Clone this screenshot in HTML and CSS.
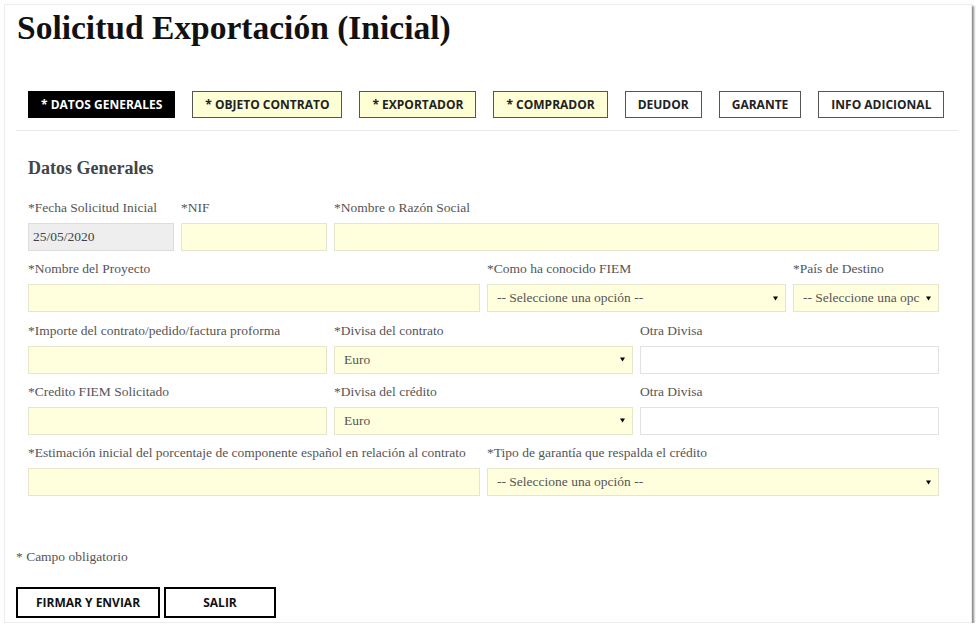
FILE: index.html
```html
<!DOCTYPE html>
<html lang="es">
<head>
<meta charset="utf-8">
<title>Solicitud Exportación (Inicial)</title>
<link rel="stylesheet" href="styles.css">
</head>
<body>
<div class="card">
  <h1 class="title">Solicitud Exportación (Inicial)</h1>
  <nav class="tabs">
    <span class="tab active">* DATOS GENERALES</span>
    <span class="tab req">* OBJETO CONTRATO</span>
    <span class="tab req">* EXPORTADOR</span>
    <span class="tab req">* COMPRADOR</span>
    <span class="tab">DEUDOR</span>
    <span class="tab">GARANTE</span>
    <span class="tab">INFO ADICIONAL</span>
  </nav>
  <div class="rule"></div>
  <section class="form">
    <h2 class="section-title">Datos Generales</h2>
    <div class="grid">
      <div class="field s2"><label>*Fecha Solicitud Inicial</label><div class="input disabled">25/05/2020</div></div>
      <div class="field s2"><label>*NIF</label><div class="input"></div></div>
      <div class="field s8"><label>*Nombre o Razón Social</label><div class="input"></div></div>

      <div class="field s6"><label>*Nombre del Proyecto</label><div class="input"></div></div>
      <div class="field s4"><label>*Como ha conocido FIEM</label><div class="input select"><span class="opt">-- Seleccione una opción --</span><svg class="arrow" width="5" height="5" viewBox="0 0 5 5"><path d="M0 0.5H5L2.5 4.5Z" fill="#000"/></svg></div></div>
      <div class="field s2"><label>*País de Destino</label><div class="input select"><span class="opt">-- Seleccione una opc</span><svg class="arrow" width="5" height="5" viewBox="0 0 5 5"><path d="M0 0.5H5L2.5 4.5Z" fill="#000"/></svg></div></div>

      <div class="field s4"><label>*Importe del contrato/pedido/factura proforma</label><div class="input"></div></div>
      <div class="field s4"><label>*Divisa del contrato</label><div class="input select"><span class="opt">Euro</span><svg class="arrow" width="5" height="5" viewBox="0 0 5 5"><path d="M0 0.5H5L2.5 4.5Z" fill="#000"/></svg></div></div>
      <div class="field s4"><label>Otra Divisa</label><div class="input white"></div></div>

      <div class="field s4"><label>*Credito FIEM Solicitado</label><div class="input"></div></div>
      <div class="field s4"><label>*Divisa del crédito</label><div class="input select"><span class="opt">Euro</span><svg class="arrow" width="5" height="5" viewBox="0 0 5 5"><path d="M0 0.5H5L2.5 4.5Z" fill="#000"/></svg></div></div>
      <div class="field s4"><label>Otra Divisa</label><div class="input white"></div></div>

      <div class="field s6"><label>*Estimación inicial del porcentaje de componente español en relación al contrato</label><div class="input"></div></div>
      <div class="field s6"><label>*Tipo de garantía que respalda el crédito</label><div class="input select"><span class="opt">-- Seleccione una opción --</span><svg class="arrow" width="5" height="5" viewBox="0 0 5 5"><path d="M0 0.5H5L2.5 4.5Z" fill="#000"/></svg></div></div>
    </div>
  </section>
  <p class="note">* Campo obligatorio</p>
  <div class="actions">
    <button class="btn">FIRMAR Y ENVIAR</button>
    <button class="btn salir">SALIR</button>
  </div>
</div>
</body>
</html>
```
FILE: styles.css
```css
html, body {
  margin: 0;
  padding: 0;
  background: #ffffff;
}
body {
  padding: 4px 0 0 4px;
  font-family: "Liberation Serif", "DejaVu Serif", serif;
}
.card {
  box-sizing: border-box;
  width: 968px;
  height: 619px;
  background: #fff;
  border: 1px solid #ececec;
  box-shadow: 2px 2px 2px #8a8a8a;
  padding: 0 12px 0 11px;
}
.title {
  margin: 3px 0 0 1px;
  font-family: "Liberation Serif", serif;
  font-weight: bold;
  font-size: 33.5px;
  line-height: 40px;
  color: #111;
}
.tabs {
  display: flex;
  gap: 17px;
  margin: 43px 0 0 12px;
}
.tab {
  box-sizing: border-box;
  height: 27px;
  padding: 0 12px;
  display: flex;
  align-items: center;
  font-family: "Open Sans", sans-serif;
  font-weight: bold;
  font-size: 12px;
  color: #222;
  border: 1px solid #555;
  background: #fff;
}
.tab.req {
  background: #ffffd6;
}
.tab.active {
  background: #000;
  color: #fff;
  border-color: #000;
}
.rule {
  height: 1px;
  background: #e8e8e8;
  margin: 12px 0 0 0;
  width: 942px;
}
.form {
  padding: 0 0 0 12px;
  width: 911px;
}
.section-title {
  margin: 26px 0 0 0;
  font-size: 18px;
  line-height: 22px;
  font-weight: bold;
  color: #444;
}
.grid {
  display: grid;
  grid-template-columns: repeat(12, 1fr);
  column-gap: 7px;
  row-gap: 9.3px;
  margin-top: 20px;
}
.s2 { grid-column: span 2; }
.s4 { grid-column: span 4; }
.s6 { grid-column: span 6; }
.s8 { grid-column: span 8; }
.field {
  min-width: 0;
}
.field label {
  display: block;
  font-size: 13.5px;
  line-height: 15px;
  color: #555;
  margin: 1px 0 8px 0;
  white-space: nowrap;
}
.input {
  box-sizing: border-box;
  height: 28px;
  background: #ffffdd;
  border: 1px solid #e6e6cc;
  font-size: 13.5px;
  color: #555;
  display: flex;
  align-items: center;
  padding: 0 7px 0 9px;
}
.input.disabled {
  background: #eeeeee;
  border-color: #dddddd;
  padding-left: 4px;
  color: #444;
}
.input.white {
  background: #fff;
  border-color: #e2e2e2;
}
.select {
  justify-content: space-between;
}
.opt {
  white-space: nowrap;
  min-width: 0;
}
.arrow {
  flex: none;
  margin-left: 4px;
}
.note {
  margin: 53px 0 0 0;
  font-size: 13.5px;
  line-height: 15px;
  color: #555;
}
.actions {
  display: flex;
  gap: 4px;
  margin-top: 23px;
}
.btn {
  box-sizing: border-box;
  height: 31px;
  background: #fff;
  border: 2px solid #000;
  font-family: "Open Sans", sans-serif;
  font-weight: bold;
  font-size: 12px;
  color: #111;
  padding: 0;
  width: 144px;
}
.btn.salir {
  width: 112px;
}
```
